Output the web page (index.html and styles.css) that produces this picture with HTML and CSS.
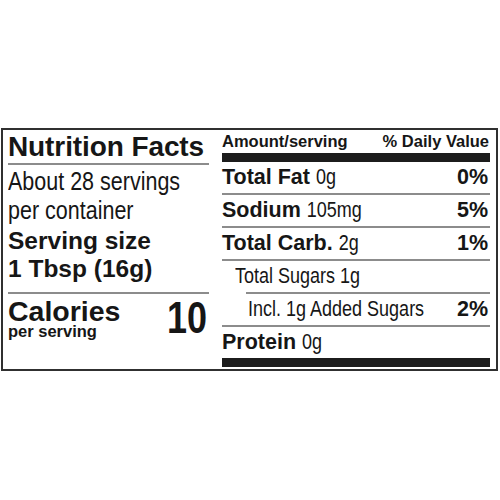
FILE: index.html
```html
<!DOCTYPE html>
<html lang="en">
<head>
<meta charset="utf-8">
<title>Nutrition Facts</title>
<link rel="stylesheet" href="styles.css">
</head>
<body>
<div class="label">
  <div class="left">
    <div class="title">Nutrition Facts</div>
    <div class="servings">
      <div class="line">About 28 servings</div>
      <div class="line">per container</div>
    </div>
    <div class="size">Serving size<br>1 Tbsp (16g)</div>
    <div class="calories">
      <div class="cal-text">
        <div class="cal-word">Calories</div>
        <div class="cal-sub">per serving</div>
      </div>
      <div class="cal-num">10</div>
    </div>
  </div>
  <div class="right">
    <div class="head"><span>Amount/serving</span><span>% Daily Value</span></div>
    <div class="row"><span><b>Total Fat</b> <span class="n">0g</span></span><b>0%</b></div>
    <div class="row"><span><b>Sodium</b> <span class="n">105mg</span></span><b>5%</b></div>
    <div class="row"><span><b>Total Carb.</b> <span class="n">2g</span></span><b>1%</b></div>
    <div class="row sub1"><span class="cell"><span class="n">Total Sugars 1g</span></span></div>
    <div class="row sub2"><span class="cell"><span class="n">Incl. 1g Added Sugars</span></span><b>2%</b></div>
    <div class="row last"><span><b>Protein</b> <span class="n">0g</span></span></div>
  </div>
</div>
</body>
</html>
```
FILE: styles.css
```css
html, body {
  margin: 0;
  padding: 0;
  background: #fff;
}
body {
  color: #161616;
  font-family: "Liberation Sans", Arial, sans-serif;
}
.label {
  box-sizing: border-box;
  display: flex;
  width: 497px;
  height: 243px;
  margin: 128px 0 0 1px;
  border: 2px solid #303030;
  padding: 0 6px 0 5px;
}
.left {
  width: 201px;
  flex: none;
}
.title {
  font-weight: 700;
  font-size: 28px;
  line-height: 32px;
  padding-top: 1px;
  border-bottom: 2px solid #8c8c8c;
  letter-spacing: -0.1px;
}
.servings {
  margin-top: 4px;
}
.servings .line {
  font-size: 21.5px;
  line-height: 29px;
  white-space: nowrap;
  transform: scaleY(1.22);
  transform-origin: 0 22px;
}
.size {
  font-weight: 700;
  font-size: 24.5px;
  line-height: 28px;
  margin-top: -0.5px;
  padding-bottom: 9.5px;
  border-bottom: 2px solid #8c8c8c;
  white-space: nowrap;
}
.calories {
  display: flex;
  justify-content: space-between;
  align-items: flex-start;
  margin-top: 5px;
}
.cal-word {
  font-weight: 700;
  font-size: 28.5px;
  line-height: 24px;
}
.cal-sub {
  font-weight: 700;
  font-size: 16.5px;
  line-height: 15px;
  margin-top: 0.5px;
}
.cal-num {
  font-weight: 700;
  font-size: 36px;
  line-height: 40px;
  margin: 2px 2px 0 0;
  transform: scaleY(1.24);
  transform-origin: 0 32.5px;
}
.right {
  flex: 1;
  margin-left: 13px;
  padding-top: 2px;
}
.head {
  display: flex;
  justify-content: space-between;
  font-weight: 700;
  font-size: 16.5px;
  line-height: 18px;
  padding: 0 1px 3px 0;
  border-bottom: 9px solid #1c1c1c;
  white-space: nowrap;
}
.row {
  display: flex;
  justify-content: space-between;
  align-items: baseline;
  font-size: 21.5px;
  line-height: 31px;
  height: 31px;
  border-bottom: 2px solid #8c8c8c;
  padding-right: 2px;
  white-space: nowrap;
}
.row b {
  font-weight: 700;
  font-size: 21.5px;
}
.n {
  display: inline-block;
  font-size: 18px;
  line-height: 20px;
  transform: scaleY(1.22);
  transform-origin: 0 16.2px;
}
.row.sub1 {
  margin-left: 24px;
}
.row.sub1 .cell {
  margin-left: -11px;
}
.row.sub2 .cell {
  margin-left: 26px;
}
.row.last {
  border-bottom: 9px solid #1c1c1c;
}
```
